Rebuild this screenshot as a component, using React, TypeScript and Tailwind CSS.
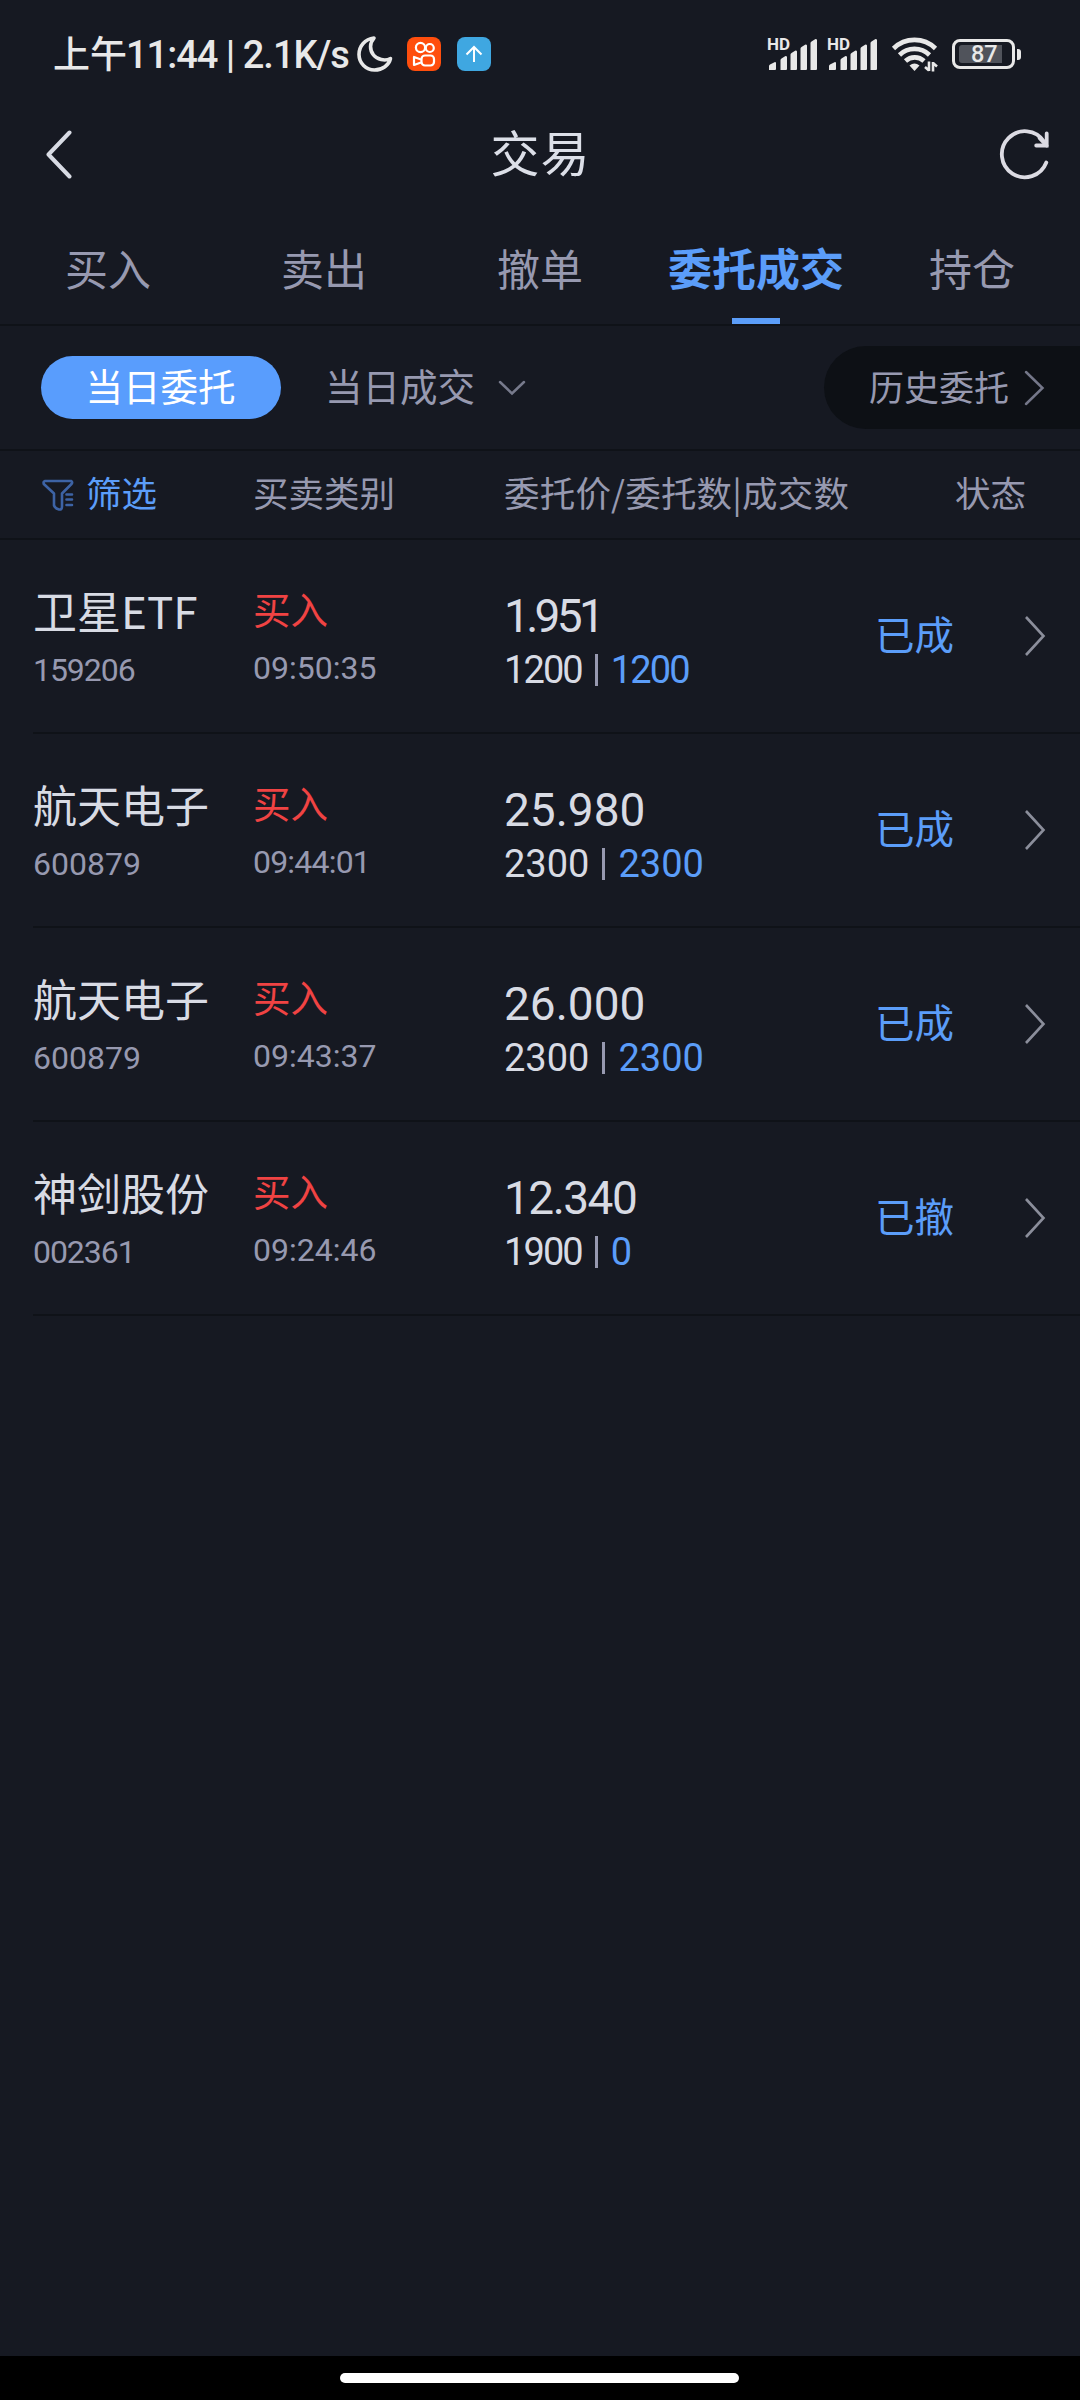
import React from 'react';
import clsx from 'clsx';

interface Order {
  name: string;
  code: string;
  time: string;
  price: string;
  amount: string;
  filled: string;
  side: string;
  status: string;
}

const tabs = ['买入', '卖出', '撤单', '委托成交', '持仓'];
const activeTab = '委托成交';

const orders: Order[] = [
  { name: '卫星ETF', code: '159206', time: '09:50:35', price: '1.951', amount: '1200', filled: '1200', side: '买入', status: '已成' },
  { name: '航天电子', code: '600879', time: '09:44:01', price: '25.980', amount: '2300', filled: '2300', side: '买入', status: '已成' },
  { name: '航天电子', code: '600879', time: '09:43:37', price: '26.000', amount: '2300', filled: '2300', side: '买入', status: '已成' },
  { name: '神剑股份', code: '002361', time: '09:24:46', price: '12.340', amount: '1900', filled: '0', side: '买入', status: '已撤' },
];

// Proportional figures: the more ones in a number, the tighter it is set
const Digits: React.FC<{ value: string; className?: string }> = ({ value, className }) => {
  const ones = value.split('1').length - 1;
  const tracking = (ones * -0.2) / value.length;
  return (
    <span className={clsx("font-['Roboto',sans-serif]", className)} style={{ letterSpacing: `${tracking.toFixed(3)}em` }}>
      {value}
    </span>
  );
};

const Signal = () => (
  <div className="relative h-[36px] w-[60px]">
    <span className="absolute left-0 top-0 font-['Roboto',sans-serif] text-[17px] font-bold leading-[17px]">HD</span>
    <svg className="absolute left-[2px] top-[3px]" width="48" height="31" fill="currentColor">
      <path d="M0 31v-4q0-1 1-1.500l5-2.500q1 0 1 1v6q0 1-1 1z" />
      <path d="M11.500 31v-10q0-1 1-1.500l4-2.500q1.500 0 1.500 1v12q0 1-1 1z" />
      <path d="M21.500 31v-15.500q0-1 1-1.500l4-2.500q1.500 0 1.500 1v17.500q0 1-1 1z" />
      <path d="M31.500 31v-21.500q0-1 1-1.500l4-2.500q1.500 0 1.500 1v23.500q0 1-1 1z" />
      <path d="M41.500 31v-27q0-1 1-1.500l4-2.500q1.500 0 1.500 1v29q0 1-1 1z" />
    </svg>
  </div>
);

const StatusBar = () => (
  <div className="flex h-[108px] items-start pl-[53px] pr-[59px] pt-[34px] text-[#e8e8e8]">
    <div className="flex h-[40px] w-[304px] items-baseline whitespace-pre font-medium leading-[36px]">
      <span className="text-[37px]">上午</span>
      <span className="-ml-[1px] font-['Roboto',sans-serif] text-[38px] tracking-[-1px]">11:44 | 2.1K/s</span>
    </div>
    <svg className="mt-[2px] shrink-0" width="36" height="36" viewBox="0 0 36 36" fill="none" stroke="currentColor" strokeWidth="3.600" strokeLinejoin="round">
      <path d="M17 2C8 3 2 10 2 18.500C2 27 9 34 17.500 34C25.500 34 32 29 33.500 22.500C28 25.500 20 23.500 16.500 19C12.500 14 12.500 7 17 2z" />
    </svg>
    <svg className="ml-[14px] mt-[3px] shrink-0" width="34" height="34" viewBox="0 0 34 34" fill="none" stroke="#fff" strokeWidth="2.200">
      <rect width="34" height="34" rx="8" fill="#ff4e0d" stroke="none" />
      <circle cx="13.500" cy="10.500" r="4.600" />
      <circle cx="22.800" cy="11" r="4" />
      <rect x="14.500" y="18.500" width="12.500" height="10" rx="3.500" />
      <path d="M14 22.500l-7-2.500v8l7-2.500" strokeLinejoin="round" />
    </svg>
    <svg className="ml-[16px] mt-[3px] shrink-0" width="34" height="34" viewBox="0 0 34 34" fill="none" stroke="#fff" strokeWidth="2">
      <rect width="34" height="34" rx="8" fill="#3fa7e1" stroke="none" />
      <path d="M17 25V10.500M9.500 17.500L17 10l7.500 7.500" />
    </svg>
    <div className="ml-auto flex pt-[2px]">
      <Signal />
      <Signal />
      <svg className="ml-[4px]" width="48" height="36" viewBox="0 0 48 36" fill="none" stroke="currentColor" strokeWidth="4.600">
        <path d="M2.500 12.500a30 30 0 0 1 42 0M8.500 19a21.500 21.500 0 0 1 30 0M14.500 25a13.500 13.500 0 0 1 18.500 0" />
        <path d="M23.500 35l-5-5.500q5-4 10 0z" fill="currentColor" stroke="none" />
        <path d="M38 25.500v9.500M38 34.500l-4-3.500M42 35.500v-9.500M42 27l4 3.500" strokeWidth="2.600" />
      </svg>
      <div className="ml-[13px] mt-[3px] flex h-[30px] items-center">
        <div className="relative h-[30px] w-[63px] rounded-[8px] border-3 border-current">
          <div className="absolute left-[4px] top-[3px] h-[18px] w-[43px] rounded-l-[3px] bg-[#50535b]" />
          <span className="absolute left-[16px] top-[1px] font-['Roboto',sans-serif] text-[23.500px] font-medium leading-[23px]">87</span>
        </div>
        <div className="ml-[2px] h-[11px] w-[4px] rounded-r-[3px] bg-current" />
      </div>
    </div>
  </div>
);

const Header = () => (
  <header className="flex h-[92px] items-center justify-between pl-[45px] pr-[30px]">
    <svg width="28" height="50" viewBox="0 0 28 50" fill="none" stroke="#d8dbe4" strokeWidth="4" strokeLinecap="round" strokeLinejoin="round">
      <path d="M24.500 3.500L3.500 25.500l21 22" />
    </svg>
    <h1 className="-mt-[7px] ml-[9px] text-[49px] leading-[60px] tracking-[1px] text-[#dcdfe8]">交易</h1>
    <svg width="51" height="52" viewBox="0 0 51 52" fill="none" stroke="#dcdbe3" strokeWidth="3.800" strokeLinecap="round">
      <path d="M47.300 34.500A23 23 0 1 1 45 13.500" />
      <path d="M47.700 5.500v12h-10.500" />
      <path d="M40.500 10l7 7.500" />
    </svg>
  </header>
);

const Tabs = () => (
  <nav className="grid h-[126px] grid-cols-5 border-b-2 border-[#0f1218]">
    {tabs.map((tab) => (
      <div key={tab} className="flex flex-col items-center justify-between pt-[37px]">
        <span
          className={clsx(
            'whitespace-nowrap leading-[60px]',
            tab === activeTab ? 'text-[44px] font-bold text-[#5b9df9]' : 'text-[43px] text-[#9799b0]'
          )}
        >
          {tab}
        </span>
        {tab === activeTab && <span className="h-[6px] w-[48px] bg-[#5b9df9]" />}
      </div>
    ))}
  </nav>
);

const SubTabs = () => (
  <div className="flex h-[125px] items-start border-b-2 border-[#0f1218] pl-[41px]">
    <button className="mt-[30px] flex h-[63px] w-[240px] justify-center rounded-full bg-[#599dfd] text-[37.500px] leading-[59px] text-white">
      <span className="-mt-[1px] -ml-[1px]">当日委托</span>
    </button>
    <button className="ml-[44px] mt-[30px] flex h-[63px] items-center text-[37.500px] leading-[59px] text-[#9799b0]">
      <span className="-mt-[6px]">当日成交</span>
      <svg className="ml-[23px]" width="28" height="16" viewBox="0 0 28 16" fill="none" stroke="#777a8c" strokeWidth="2.500" strokeLinecap="round">
        <path d="M2 2l12 11.500L26 2" />
      </svg>
    </button>
    <button className="ml-auto mt-[20px] flex h-[83px] w-[256px] items-center rounded-l-full bg-[#0d1015] pl-[45px] text-[35px] text-[#9799b0]">
      <span className="-mt-[4px] leading-[60px]">历史委托</span>
      <svg className="ml-[14px]" width="22" height="36" viewBox="0 0 22 36" fill="none" stroke="#747789" strokeWidth="2.500" strokeLinecap="round">
        <path d="M3 2l16.500 16L3 34" />
      </svg>
    </button>
  </div>
);

const TableHead = () => (
  <div className="flex h-[89px] items-center border-b-2 border-[#0f1218] pl-[42px] text-[35.500px] leading-[60px] text-[#9799b0]">
    <div className="flex w-[211px] items-center text-[#5b9df9]">
      <svg width="32" height="32" viewBox="0 0 32 32" fill="none" stroke="#3d63a5" strokeWidth="2.600" strokeLinejoin="round" strokeLinecap="round">
        <path d="M3 2h26q2 1 .5 3L20 14.500v13q0 3.500-3 3q-4-1-5-4V14.500L1.800 5Q1 2.500 3 2z" />
        <path d="M24.500 15.500H30M24.500 20.500H30M24.500 26H30" />
      </svg>
      <span className="-mt-[5px] ml-[12px]">筛选</span>
    </div>
    <span className="-mt-[5px] w-[251px]">买卖类别</span>
    <span className="-mt-[5px] w-[451px] whitespace-nowrap tracking-[0.2px]">委托价/委托数|成交数</span>
    <span className="-mt-[5px]">状态</span>
  </div>
);

const OrderRow: React.FC<{ order: Order }> = ({ order }) => (
  <div className="ml-[33px] flex h-[194px] border-b-2 border-[#0f1218] text-[#d8dbe4]">
    <div className="w-[220px] pt-[40px]">
      <div className="text-[44px] leading-[60px]">{order.name}</div>
      <div className="mt-[10px] flex text-[32px] leading-[40px] text-[#9799b0]">
        <Digits value={order.code} />
      </div>
    </div>
    <div className="w-[251px] pt-[38px]">
      <div className="text-[37.500px] leading-[60px] text-[#f04343]">{order.side}</div>
      <div className="mt-[10px] flex text-[32px] leading-[40px] text-[#9799b0]">
        <Digits value={order.time} />
      </div>
    </div>
    <div className="w-[371px] pt-[46px]">
      <div className="flex text-[46px] leading-[60px]">
        <Digits value={order.price} />
      </div>
      <div className="mt-[4px] flex items-center text-[38px] leading-[40px]">
        <Digits value={order.amount} />
        <span className="ml-[13px] mr-[13px] h-[32px] w-[3px] bg-[#9799b0]" />
        <Digits value={order.filled} className="text-[#5b9df9]" />
      </div>
    </div>
    <div className="flex flex-1 items-center justify-between pr-[33px]">
      <span className="-mt-[6px] text-[39.500px] leading-[60px] text-[#5b9df9]">{order.status}</span>
      <svg width="24" height="42" viewBox="0 0 24 42" fill="none" stroke="#8b8e9b" strokeWidth="2.600">
        <path d="M3 2l17.500 19L3 40" />
      </svg>
    </div>
  </div>
);

export default function App() {
  return (
    <div className="flex h-[2400px] w-[1080px] flex-col overflow-hidden bg-[#161922] font-['Noto_Sans_CJK_SC',sans-serif]">
      <StatusBar />
      <Header />
      <Tabs />
      <SubTabs />
      <TableHead />
      {orders.map((order) => (
        <OrderRow key={order.time} order={order} />
      ))}
      <div className="mt-auto flex h-[44px] justify-center bg-black pr-px pt-[17px]">
        <div className="h-[10px] w-[399px] rounded-full bg-white" />
      </div>
    </div>
  );
}
